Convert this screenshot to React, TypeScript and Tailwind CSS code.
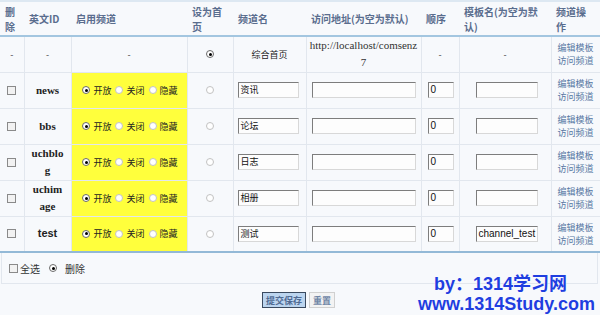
import React from 'react';

const cjk = '"Noto Sans CJK SC", "Liberation Sans", sans-serif';
const serif = '"Liberation Serif", "Noto Sans CJK SC", serif';
const sans = '"Liberation Sans", "Noto Sans CJK SC", sans-serif';

type Row = {
  id: React.ReactNode;
  sans?: boolean;
  name: string;
  tpl?: string;
};

const rows: Row[] = [
  { id: 'news', name: '资讯' },
  { id: 'bbs', name: '论坛' },
  { id: <>uchblo<br />g</>, name: '日志' },
  { id: <>uchim<br />age</>, name: '相册' },
  { id: 'test', sans: true, name: '测试', tpl: 'channel_test' },
];

function Radio({ checked }: { checked?: boolean }) {
  return (
    <span
      className={`inline-flex items-center justify-center w-[8px] h-[8px] rounded-full border bg-white shrink-0 ${
        checked ? 'border-[#6a6a6a]' : 'border-[#c2c2c2]'
      }`}
    >
      {checked && <span className="w-[3px] h-[3px] rounded-full bg-black" />}
    </span>
  );
}

function Checkbox() {
  return <span className="inline-block w-[9px] h-[9px] border border-[#8a8a8a] bg-[#f2f2f2] shrink-0" />;
}

function Field({ w, value, latin }: { w: number; value?: string; latin?: boolean }) {
  return (
    <div
      className={`h-[16px] border border-t-[#7d7d7d] border-l-[#7d7d7d] border-b-[#d8d8d8] border-r-[#d8d8d8] bg-[#fdfdfd] pl-[2px] text-[#111] overflow-hidden whitespace-nowrap text-left ${
        latin ? 'text-[10px] leading-[14px]' : 'text-[9px] leading-[14px]'
      }`}
      style={{ width: w, fontFamily: latin ? sans : cjk }}
    >
      {value}
    </div>
  );
}

function Links() {
  return (
    <div className="text-[9px] leading-[13px] text-[#5878a3] text-left pl-[6px] whitespace-nowrap" style={{ fontFamily: cjk }}>
      <div>编辑模板</div>
      <div>访问频道</div>
    </div>
  );
}

const td = 'border-r border-b border-[#e2e7ee] p-0 align-middle text-center';
const th = 'text-left align-middle pl-[5px] pr-[2px] font-bold text-[10px] leading-[15px] text-[#5a6d8e] whitespace-nowrap';

export default function App() {
  return (
    <div className="relative w-[600px] h-[315px] bg-[#f7f9fc] overflow-hidden" style={{ fontFamily: cjk }}>
      <div className="border-t-2 border-[#dde8f2]">
        <table className="table-fixed border-collapse w-[600px]">
          <colgroup>
            <col className="w-[24px]" />
            <col className="w-[47px]" />
            <col className="w-[116px]" />
            <col className="w-[46px]" />
            <col className="w-[73px]" />
            <col className="w-[115px]" />
            <col className="w-[38px]" />
            <col className="w-[92px]" />
            <col className="w-[49px]" />
          </colgroup>
          <thead>
            <tr className="h-[34px] border-b-2 border-[#a3c6e0]">
              <th className={th}>
                删<br />除
              </th>
              <th className={th}>英文ID</th>
              <th className={th}>启用频道</th>
              <th className={th}>
                设为首<br />页
              </th>
              <th className={th}>频道名</th>
              <th className={th}>访问地址(为空为默认)</th>
              <th className={th}>顺序</th>
              <th className={th}>
                模板名(为空为默<br />认)
              </th>
              <th className={th}>
                频道操<br />作
              </th>
            </tr>
          </thead>
          <tbody className="text-[9px] leading-[13px] text-[#444]">
            <tr className="h-[36px]">
              <td className={td}>-</td>
              <td className={td}>-</td>
              <td className={td}>-</td>
              <td className={td}>
                <div className="flex justify-center">
                  <Radio checked />
                </div>
              </td>
              <td className={`${td} text-[#222]`}>综合首页</td>
              <td className={`${td} text-[11px] leading-[17px] text-[#333] whitespace-nowrap`} style={{ fontFamily: serif }}>
                http://localhost/comsenz
                <br />7
              </td>
              <td className={td}>-</td>
              <td className={td}>-</td>
              <td className={`${td} border-r-0`}>
                <Links />
              </td>
            </tr>
            {rows.map((r, i) => (
              <tr key={i} className={`h-[36px] ${i === rows.length - 1 ? 'border-b-2 border-[#93b9d7]' : ''}`}>
                <td className={td}>
                  <div className="flex justify-center">
                    <Checkbox />
                  </div>
                </td>
                <td
                  className={`${td} font-bold text-[11px] leading-[17px] text-[#222]`}
                  style={{ fontFamily: r.sans ? sans : serif }}
                >
                  {r.id}
                </td>
                <td className={`${td} bg-[#ffff3c]`}>
                  <div className="flex items-center justify-center pl-[2px] text-[#222]">
                    <Radio checked />
                    <span className="ml-[3px] mr-[4px]">开放</span>
                    <Radio />
                    <span className="ml-[3px] mr-[4px]">关闭</span>
                    <Radio />
                    <span className="ml-[3px]">隐藏</span>
                  </div>
                </td>
                <td className={td}>
                  <div className="flex justify-center">
                    <Radio />
                  </div>
                </td>
                <td className={td}>
                  <div className="flex pl-[4px]">
                    <Field w={61} value={r.name} />
                  </div>
                </td>
                <td className={td}>
                  <div className="flex pl-[5px]">
                    <Field w={104} />
                  </div>
                </td>
                <td className={td}>
                  <div className="flex pl-[6px]">
                    <Field w={26} value="0" latin />
                  </div>
                </td>
                <td className={td}>
                  <div className="flex pl-[16px]">
                    <Field w={62} value={r.tpl} latin />
                  </div>
                </td>
                <td className={`${td} border-r-0`}>
                  <Links />
                </td>
              </tr>
            ))}
          </tbody>
        </table>
      </div>

      <div className="flex items-center h-[31px] ml-[1px] mr-[2px] border-l border-r border-b border-[#e2e7ee] pl-[7px] text-[10px] text-[#333]">
        <Checkbox />
        <span className="ml-[2px]">全选</span>
        <span className="ml-[9px] flex">
          <Radio checked />
        </span>
        <span className="ml-[8px]">删除</span>
      </div>

      <div className="flex justify-center gap-[3px] mt-[8px] pr-[3px]">
        <button className="h-[16px] px-[3px] border border-[#3a4a60] bg-[#bcd5ef] text-[9px] leading-[13px] font-bold text-[#4f6a93]">
          提交保存
        </button>
        <button className="h-[16px] px-[3px] border border-[#d0d0d0] bg-[#f3f3f3] text-[9px] leading-[13px] font-bold text-[#7086a6]">
          重置
        </button>
      </div>

      <div
        className="absolute right-[5px] bottom-[1px] text-right font-bold text-[18px] leading-[20px] text-[#1f3ee0]"
        style={{ fontFamily: sans, textShadow: '0 0 1px #fff, 0 0 1px #fff' }}
      >
        <div className="pr-[28px]">by：1314学习网</div>
        <div>www.1314Study.com</div>
      </div>
    </div>
  );
}
